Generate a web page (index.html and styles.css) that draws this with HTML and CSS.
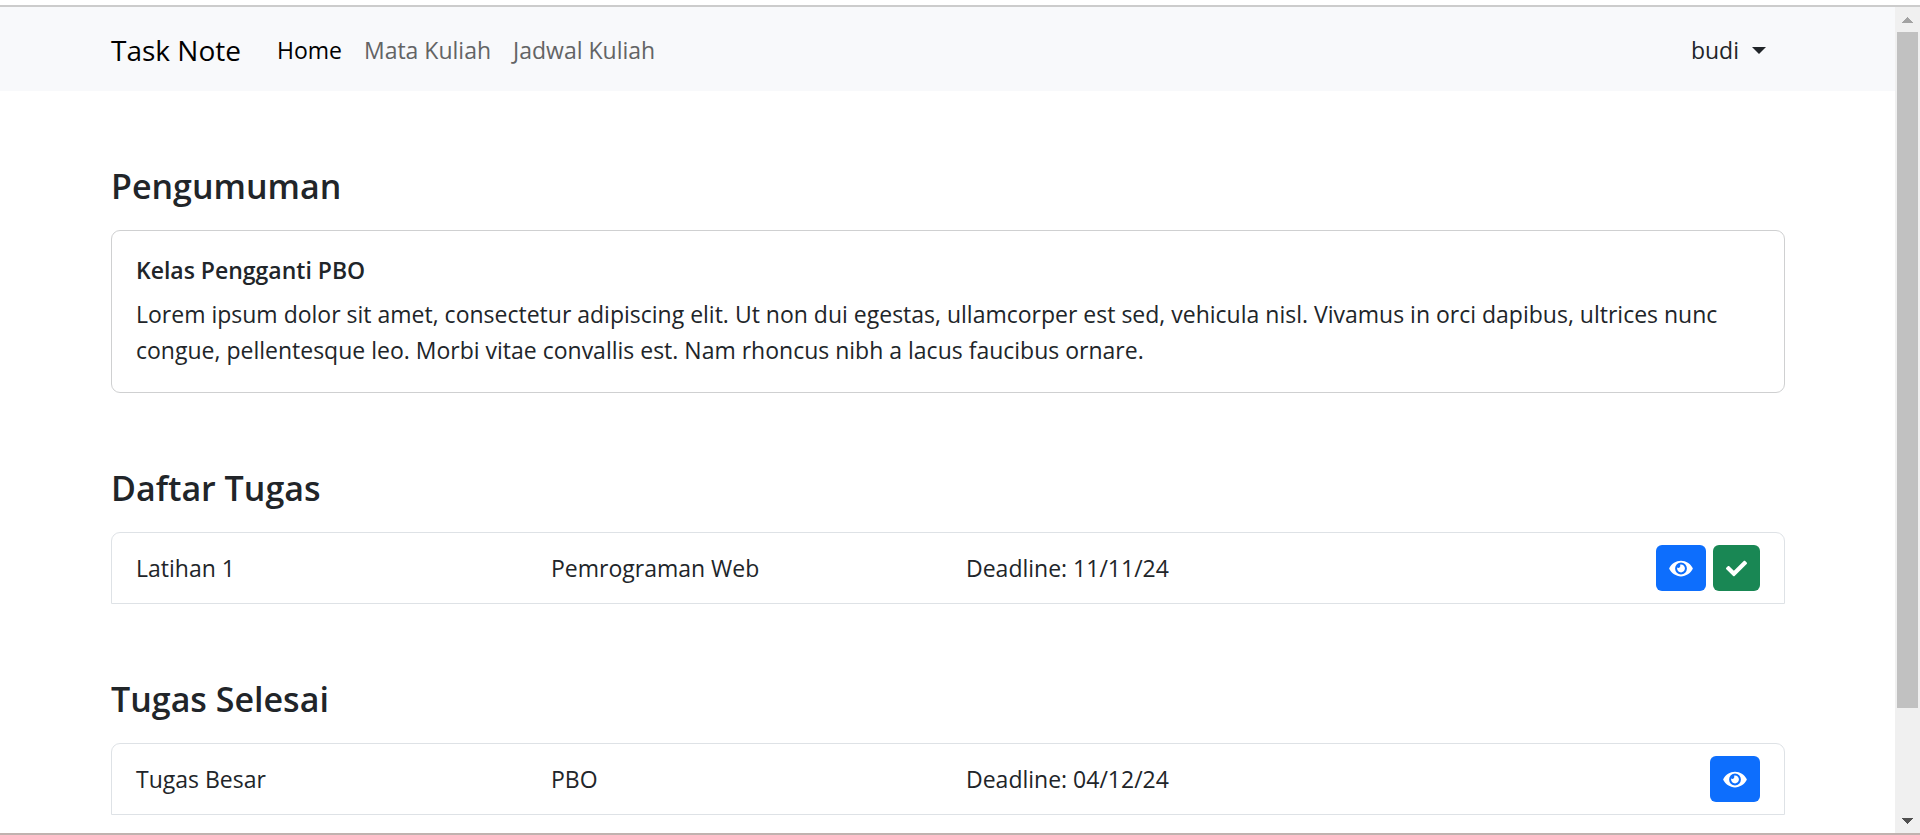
FILE: index.html
```html
<!DOCTYPE html>
<html lang="id">
<head>
<meta charset="utf-8">
<title>Task Note</title>
<link rel="stylesheet" href="styles.css">
</head>
<body>
<svg class="sprite" aria-hidden="true">
  <symbol id="eye" viewBox="0 0 576 512"><path d="M572.52 241.4C518.29 135.59 410.93 64 288 64S57.68 135.64 3.48 241.41a32.35 32.35 0 0 0 0 29.19C57.71 376.41 165.07 448 288 448s230.32-71.64 284.52-177.41a32.35 32.35 0 0 0 0-29.19zM288 400a144 144 0 1 1 144-144 143.93 143.93 0 0 1-144 144zm0-240a95.31 95.31 0 0 0-25.31 3.79 47.85 47.85 0 0 1-66.9 66.9A95.78 95.78 0 1 0 288 160z"/></symbol>
  <symbol id="check" viewBox="0 0 512 512"><path d="M173.898 439.404l-166.4-166.4c-9.997-9.997-9.997-26.206 0-36.204l36.203-36.204c9.997-9.998 26.207-9.998 36.204 0L192 312.69 432.095 72.596c9.997-9.997 26.207-9.997 36.204 0l36.203 36.204c9.997 9.997 9.997 26.206 0 36.204l-294.4 294.401c-9.998 9.997-26.207 9.997-36.204-.001z"/></symbol>
</svg>
<div class="window">
  <div class="page">
    <header class="navbar">
      <a class="brand" href="#">Task Note</a>
      <nav class="nav">
        <a class="nav-link active" href="#">Home</a>
        <a class="nav-link" href="#">Mata Kuliah</a>
        <a class="nav-link" href="#">Jadwal Kuliah</a>
      </nav>
      <button class="user" type="button">budi<span class="caret"></span></button>
    </header>
    <main class="content">
      <section>
        <h1 class="title">Pengumuman</h1>
        <article class="card">
          <h2 class="card-title">Kelas Pengganti PBO</h2>
          <p class="card-text">Lorem ipsum dolor sit amet, consectetur adipiscing elit. Ut non dui egestas, ullamcorper est sed, vehicula nisl. Vivamus in orci dapibus, ultrices nunc congue, pellentesque leo. Morbi vitae convallis est. Nam rhoncus nibh a lacus faucibus ornare.</p>
        </article>
      </section>
      <section>
        <h1 class="title">Daftar Tugas</h1>
        <div class="task">
          <span>Latihan 1</span>
          <span>Pemrograman Web</span>
          <span>Deadline: 11/11/24</span>
          <div class="actions">
            <button class="btn view" type="button" aria-label="Lihat"><svg class="icon-eye"><use href="#eye"/></svg></button>
            <button class="btn done" type="button" aria-label="Selesai"><svg class="icon-check"><use href="#check"/></svg></button>
          </div>
        </div>
      </section>
      <section>
        <h1 class="title">Tugas Selesai</h1>
        <div class="task">
          <span>Tugas Besar</span>
          <span>PBO</span>
          <span>Deadline: 04/12/24</span>
          <div class="actions">
            <button class="btn view" type="button" aria-label="Lihat"><svg class="icon-eye"><use href="#eye"/></svg></button>
          </div>
        </div>
      </section>
    </main>
  </div>
  <div class="scrollbar" aria-hidden="true">
    <svg class="arrow up" viewBox="0 0 11 6"><path d="M0 6V5h1V4h1V3h1V2h1V1h1V0h1v1h1v1h1v1h1v1h1v1h1v1z"/></svg>
    <div class="track"><div class="thumb"></div></div>
    <svg class="arrow down" viewBox="0 0 11 6"><path d="M0 0v1h1v1h1v1h1v1h1v1h1v1h1V5h1V4h1V3h1V2h1V1h1V0z"/></svg>
  </div>
</div>
</body>
</html>
```
FILE: styles.css
```css
* {
  box-sizing: border-box;
}

body {
  margin: 0;
  height: 100vh;
  padding-top: 5px;
  overflow: hidden;
  background: #fff;
  color: #212529;
  font: 400 23px/36px "Open Sans", "Noto Sans", sans-serif;
}

h1, h2, p {
  margin: 0;
}

a {
  color: inherit;
  text-decoration: none;
}

button {
  font: inherit;
  color: inherit;
  border: 0;
  background: none;
  cursor: pointer;
}

.sprite {
  display: none;
}

.window {
  display: flex;
  height: 100%;
  border-top: 2px solid #ccc;
  border-bottom: 2px solid #c0b2af;
}

.page {
  flex: 1;
  min-width: 0;
  overflow: hidden;
}

.navbar {
  display: flex;
  align-items: center;
  height: 84px;
  padding: 2px 110px 0 111px;
  background: #f8f9fb;
}

.brand {
  margin-right: 36px;
  color: #000;
  font-size: 28px;
}

.nav {
  display: flex;
  gap: 22px;
}

.nav-link {
  color: #636465;
}

.nav-link.active {
  color: #000;
}

.user {
  display: flex;
  align-items: center;
  gap: 13px;
  margin-left: auto;
  padding: 0 19px;
}

.caret {
  border: 7px solid transparent;
  border-top-color: #212529;
  border-bottom: 0;
}

.content {
  display: flex;
  flex-direction: column;
  gap: 72px;
  padding: 72px 110px 72px 111px;
}

.title {
  margin-bottom: 21px;
  font-size: 34px;
  line-height: 46px;
  font-weight: 600;
}

.card {
  padding: 24px;
  border: 1px solid #cfd0d1;
  border-radius: 9px;
}

.card-title {
  margin-bottom: 11px;
  font-size: 23px;
  line-height: 30px;
  font-weight: 600;
}

.task {
  display: grid;
  grid-template-columns: repeat(4, 1fr);
  column-gap: 36px;
  align-items: center;
  padding: 12px 24px;
  border: 1px solid #dee2e6;
  border-radius: 9px 9px 0 0;
}

.actions {
  display: flex;
  justify-content: flex-end;
  gap: 7px;
}

.btn {
  display: flex;
  align-items: center;
  height: 46px;
  padding: 0 13px;
  border-radius: 6px;
}

.view {
  background: #0d6efd;
}

.done {
  background: #198754;
}

.icon-eye, .icon-check {
  width: 24px;
  height: 21px;
  fill: #fff;
}

.icon-check {
  width: 21px;
}

.scrollbar {
  display: flex;
  flex-direction: column;
  align-items: center;
  width: 25px;
  padding: 10px 2px 9px;
  background: #f0f0f0;
}

.arrow {
  width: 11px;
  height: 6px;
}

.up {
  fill: #a3a3a3;
}

.down {
  fill: #505050;
}

.track {
  flex: 1;
  width: 21px;
  margin: 9px 0;
}

.thumb {
  height: 87%;
  background: #c1c1c1;
}
```
